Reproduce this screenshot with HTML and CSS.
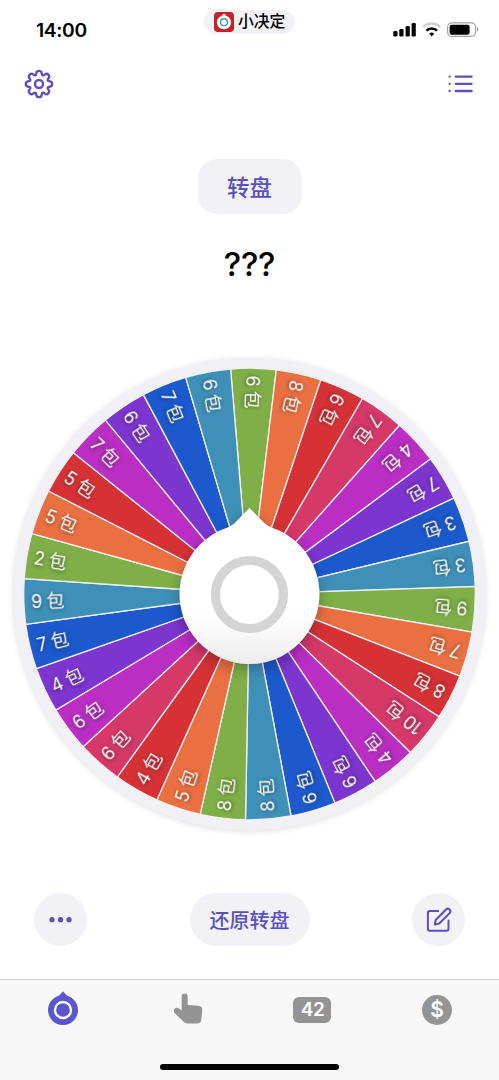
FILE: index.html
```html
<!DOCTYPE html>
<html lang="zh-CN">
<head>
<meta charset="utf-8">
<meta name="viewport" content="width=device-width">
<title>小决定</title>
<link rel="stylesheet" href="styles.css">
</head>
<body>
<div class="app">
  <header class="status">
    <span class="clock">14:00</span>
    <div class="source">
      <svg class="source-icon" width="20" height="20" viewBox="0 0 20 20">
        <rect width="20" height="20" rx="4" fill="#c42327"/>
        <path d="M10 1.6 12.2 3.7a7 7 0 1 1-4.4 0Z" fill="#fff"/>
        <circle cx="10" cy="10.2" r="3.4" fill="none" stroke="#3f96bd" stroke-width="1.4"/>
      </svg>
      <span>小决定</span>
    </div>
    <svg class="signals" width="87" height="18" viewBox="0 0 87 18">
      <rect x="0.3" y="10" width="4.2" height="5.5" rx="1.2"/>
      <rect x="6.3" y="8" width="4.2" height="7.5" rx="1.2"/>
      <rect x="12.6" y="5" width="4.2" height="10.5" rx="1.2"/>
      <rect x="18.6" y="2" width="4.2" height="13.5" rx="1.2"/>
      <g fill="none">
        <path d="M30.2 6.1a12 12 0 0 1 17 0" stroke="#d0d0d0" stroke-width="2.4"/>
        <path d="M33.4 9.7a7.5 7.5 0 0 1 10.6 0" stroke="#000" stroke-width="2.6"/>
      </g>
      <path d="M36.2 12.6a3.6 3.6 0 0 1 5 0L38.7 15.4Z"/>
      <rect x="54.6" y="1.8" width="28" height="13.6" rx="4.3" fill="none" stroke="#a3a3a3" stroke-width="1.2"/>
      <rect x="56.6" y="3.8" width="20" height="10" rx="2.2"/>
      <path d="M84 6.3v4.4c1.8-.5 1.8-3.9 0-4.4Z" fill="#999"/>
    </svg>
  </header>

  <div class="toolbar">
    <svg width="32" height="32" viewBox="-16 -16 32 32" fill="none" stroke="#5b50bd" stroke-width="2.4">
      <defs><path id="tooth" d="M-3.67-8.87C-2.6-9.3-2.9-10.2-2.6-11.2C-2-13.8 2-13.8 2.6-11.2C2.9-10.2 2.6-9.3 3.67-8.87" stroke-linecap="round"/></defs>
      <use href="#tooth"/><use href="#tooth" transform="rotate(45)"/><use href="#tooth" transform="rotate(90)"/><use href="#tooth" transform="rotate(135)"/>
      <use href="#tooth" transform="rotate(180)"/><use href="#tooth" transform="rotate(225)"/><use href="#tooth" transform="rotate(270)"/><use href="#tooth" transform="rotate(315)"/>
      <circle r="4"/>
    </svg>
    <svg width="26" height="20" viewBox="0 0 26 20" fill="none" stroke="#5b50bd" stroke-width="2.3" stroke-linecap="round">
      <path d="M7.7 2.6H23.6M7.7 9.8H23.6M7.7 17H23.6M1.6 2.6h.1M1.6 9.8h.1M1.6 17h.1"/>
    </svg>
  </div>

  <main class="content">
    <button class="mode">转盘</button>
    <h1 class="result">???</h1>
    <svg class="wheel" id="wheel" width="499" height="500" viewBox="-249.5 -250 499 500">
      <defs>
        <linearGradient id="hubFill" gradientUnits="userSpaceOnUse" x1="0" y1="18" x2="0" y2="70">
          <stop offset="0" stop-color="#fff"/><stop offset="1" stop-color="#ededee"/>
        </linearGradient>
      </defs>
      <circle class="rim" r="236.2"/>
      <g id="slices"></g>
      <path class="hub" d="M0-86 14.5-71.3Q16.5-69 22-66.4A70 70 0 1 1-22-66.4Q-16.5-69-14.5-71.3Z" fill="url(#hubFill)"/>
      <circle cy=".5" r="34" fill="#fff" stroke="#d4d4d4" stroke-width="9.2"/>
    </svg>
  </main>

  <div class="actions">
    <button class="round"><svg width="24" height="8" viewBox="0 0 24 8" fill="#5b50bd"><circle cx="3" cy="3.7" r="2.6"/><circle cx="11.6" cy="3.7" r="2.6"/><circle cx="20" cy="3.7" r="2.6"/></svg></button>
    <button class="reset">还原转盘</button>
    <button class="round"><svg width="28" height="28" viewBox="0 0 28 28" fill="none" stroke="#5b50bd" stroke-width="2" stroke-linecap="round" stroke-linejoin="round"><path d="M13.2 5H4.9a2 2 0 0 0-2 2V22.8a2 2 0 0 0 2 2H21.5a2 2 0 0 0 2-2V14.6"/><path d="M9.8 18.6 10.7 14 21 3.5a2.5 2.5 0 0 1 3.6 3.6L14.3 17.5Z"/></svg></button>
  </div>

  <nav class="tabs">
    <svg width="34" height="36" viewBox="-17 -19 34 36">
      <path d="M0-18.7 2.8-15.6Q3.2-15 5-14.1A15 15 0 1 1-5-14.1Q-3.2-15-2.8-15.6Z" fill="#5a55d0"/>
      <circle r="8" fill="none" stroke="#fff" stroke-width="2.3"/>
    </svg>
    <svg width="34" height="36" viewBox="170.6 992.5 34 36">
      <path d="M181.3 998a3 3 0 0 1 6 0V1006.4L198 1007.3Q202 1007.8 201.9 1011.5L201 1021Q200.5 1025 196.5 1025H187.5Q184.8 1025 183.2 1023.2L174 1014.3a3.1 3.1 0 0 1 4-4.5L181.3 1012Z" fill="#949494"/>
    </svg>
    <span class="number">42</span>
    <span class="coin">$</span>
    <i class="home-bar"></i>
  </nav>
</div>
<script src="wheel.js"></script>
</body>
</html>
```
FILE: styles.css
```css
* { box-sizing: border-box; }
body { margin: 0; background: #fff; font-family: Inter, "Noto Sans CJK SC", sans-serif; color: #000; }
button { border: 0; padding: 0; font: inherit; color: #5850c2; background: #f1f1f6; }
svg { display: block; flex: none; }
.app { width: 499px; height: 1080px; display: flex; flex-direction: column; overflow: hidden; }

.status { height: 60px; display: grid; grid-template-columns: 1fr 91px 1fr; align-items: start; }
.clock { padding: 18px 0 0 36px; font-size: 19.3px; line-height: 24px; font-weight: 600; letter-spacing: -0.35px; }
.source { height: 24px; margin-top: 10px; padding-left: 10px; border-radius: 12px; background: #f2f2f6; display: flex; align-items: center; gap: 4px; font-size: 15.8px; line-height: 24px; font-weight: 500; white-space: nowrap; }
.signals { justify-self: end; margin: 21px 19px 0 0; }

.toolbar { height: 48px; padding: 0 25px 0 22.5px; display: flex; align-items: center; justify-content: space-between; }

.content { display: flex; flex-direction: column; align-items: center; padding-top: 51px; }
.mode { width: 104px; height: 55px; padding-bottom: 2px; border-radius: 19px; font-size: 22.5px; font-weight: 500; }
.result { margin: 30px 0 0; font-size: 33px; line-height: 40px; font-weight: 500; letter-spacing: -0.2px; }
.wheel { margin-top: 60px; }
.rim { fill: #f0f0f5; filter: drop-shadow(0 1px 3px rgba(0, 0, 0, .13)); }
.slice { stroke: #f3f0f5; stroke-width: 1.3; }
.label { fill: #fff; font-size: 18px; filter: drop-shadow(0 1px 2px rgba(0, 0, 0, .55)); }
.hub { filter: drop-shadow(0 5px 7px rgba(0, 0, 0, .28)); }

.actions { display: flex; justify-content: space-between; align-items: center; height: 53px; margin-top: 49px; padding: 0 34px; }
.round { width: 53px; height: 53px; border-radius: 50%; display: flex; align-items: center; justify-content: center; }
.reset { width: 120px; height: 53px; border-radius: 27px; font-size: 20px; font-weight: 500; }

.tabs { position: relative; margin-top: 33px; height: 101px; padding: 11px 0 0 1px; border-top: 1px solid #cfcfd0; background: #f7f7f7; display: grid; grid-template-columns: repeat(4, 124.6px); justify-items: center; align-items: start; }
.number, .coin { background: #949494; color: #fff; text-align: center; font-weight: 600; }
.number { width: 38px; height: 26px; margin-top: 6px; border-radius: 6px; font-size: 19px; line-height: 26px; letter-spacing: -0.4px; }
.coin { width: 30px; height: 30px; margin-top: 4px; border-radius: 50%; font-size: 21px; line-height: 30px; }
.home-bar { position: absolute; left: 160px; bottom: 10px; width: 179px; height: 6px; border-radius: 3px; background: #000; }
```
FILE: wheel.js
```js
const colors = {
  green: '#80af48', orange: '#eb7041', red: '#d63236', pink: '#d63868',
  magenta: '#ba2ec3', purple: '#7d35d0', blue: '#1c59cd', teal: '#3f90b9'
};
const cycle = Object.keys(colors);
const counts = [6, 8, 6, 7, 4, 7, 3, 3, 9, 7, 8, 10, 4, 6, 6, 8, 8, 5, 4, 6, 6, 4, 7, 9, 2, 5, 5, 7, 6, 7, 6];
const tail = ['magenta', 'purple', 'blue', 'teal'];
const step = 360 / counts.length;
const start = -4.8;
const radius = 225.8;
const point = (deg) => {
  const a = deg * Math.PI / 180;
  return `${(radius * Math.sin(a)).toFixed(2)} ${(-radius * Math.cos(a)).toFixed(2)}`;
};
let slices = '';
let labels = '';
counts.forEach((count, i) => {
  const from = start + i * step;
  const name = i < 27 ? cycle[i % 8] : tail[i - 27];
  slices += `<path class="slice" fill="${colors[name]}" d="M0 0L${point(from)}A${radius} ${radius} 0 0 1 ${point(from + step)}Z"/>`;
  labels += `<text class="label" transform="rotate(${from + step / 2 + 90})" x="-218.5" y="6.5">${count}<tspan dx="4">包</tspan></text>`;
});
document.getElementById('slices').innerHTML = slices + labels;
```
